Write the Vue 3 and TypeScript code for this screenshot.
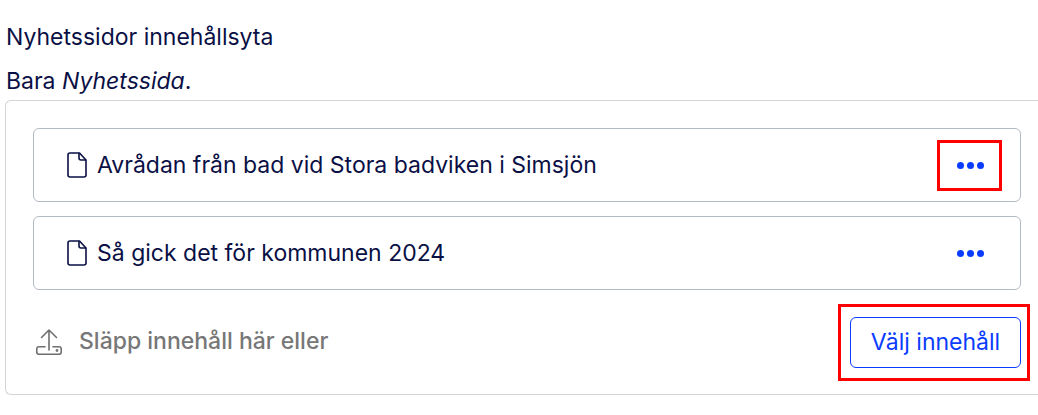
<script setup lang="ts">
const items: string[] = ['Avrådan från bad vid Stora badviken i Simsjön', 'Så gick det för kommunen 2024']
</script>

<template>
  <div class="page">
    <div class="title">Nyhetssidor innehållsyta</div>
    <div class="hint">Bara <em>Nyhetssida</em>.</div>
    <div class="area">
      <div v-for="(item, i) in items" :key="item" class="row">
        <svg class="doc" width="20" height="26" viewBox="0 0 20 26" fill="none" stroke="#0a1045" stroke-width="1.6" stroke-linejoin="round" stroke-linecap="round">
          <path d="M3 1h9.500L19 8v15a2 2 0 0 1-2 2H3a2 2 0 0 1-2-2V3a2 2 0 0 1 2-2z" />
          <path d="M12 1.500V6a2 2 0 0 0 2 2h4.500" />
        </svg>
        <span class="label">{{ item }}</span>
        <div class="menu" :class="{ marked: i === 0 }">
          <span class="dot" /><span class="dot" /><span class="dot" />
        </div>
      </div>
      <div class="drop">
        <div class="drop-left">
          <svg class="upload" width="26" height="26" viewBox="0 0 26 26" fill="none" stroke="#6f6f6f" stroke-width="1.6" stroke-linecap="round" stroke-linejoin="round">
            <path d="M13 1v20M5.500 8.500 13 1l7.500 7.500" />
            <path d="M9 17.750H3A2.250 2.250 0 0 0 .75 20v3A2.250 2.250 0 0 0 3 25.250h20A2.250 2.250 0 0 0 25.250 23v-3A2.250 2.250 0 0 0 23 17.750h-6" />
            <circle cx="21" cy="21.500" r=".6" />
          </svg>
          <span class="drop-text">Släpp innehåll här eller</span>
        </div>
        <div class="btn-mark"><button class="btn" type="button">Välj innehåll</button></div>
      </div>
    </div>
  </div>
</template>

<style>
html, body { margin: 0; background: #fff; }
</style>

<style scoped>
.page { width: 1038px; height: 415px; overflow: hidden; font-family: Inter, "Liberation Sans", sans-serif; color: #0a1045; box-sizing: border-box; padding: 24px 0 0 5px; }
.title { font-size: 23px; line-height: 27px; padding-left: 1px; }
.hint { font-size: 23px; line-height: 27px; margin-top: 17px; margin-bottom: 5px; padding-left: 1px; }
.area { border: 1px solid #d3d5da; border-right: none; border-radius: 6px 0 0 6px; height: 295px; box-sizing: border-box; padding: 27px 17px 0 27px; }
.row { height: 74px; box-sizing: border-box; border: 1px solid #b4bac4; border-radius: 6px; margin-bottom: 14px; display: flex; align-items: center; padding: 0 18px 0 33px; gap: 10px; }
.doc { flex: none; }
.label { font-size: 23px; line-height: 28px; flex: 1; }
.menu { width: 65px; height: 51px; box-sizing: border-box; display: flex; align-items: center; justify-content: center; gap: 3px; padding-left: 1px; }
.menu.marked { border: 3px solid #ff0000; }
.dot { width: 7px; height: 7px; border-radius: 50%; background: #0a3cff; }
.drop { display: flex; justify-content: space-between; align-items: center; margin-right: -9px; padding-left: 3px; }
.drop-left { display: flex; align-items: center; gap: 17px; color: #777; font-size: 23px; font-weight: 500; }
.drop-text { line-height: 28px; margin-top: -3px; }
.upload { flex: none; margin-top: -2px; }
.btn-mark { border: 3px solid #ff0000; padding: 10px 6px 10px 9px; width: 192px; height: 77px; box-sizing: border-box; }
.btn { display: block; width: 100%; height: 100%; padding: 0 0 2px; background: #fff; border: 1px solid #0a3cff; border-radius: 6px; color: #0a3cff; font: 23px Inter, sans-serif; }
</style>
